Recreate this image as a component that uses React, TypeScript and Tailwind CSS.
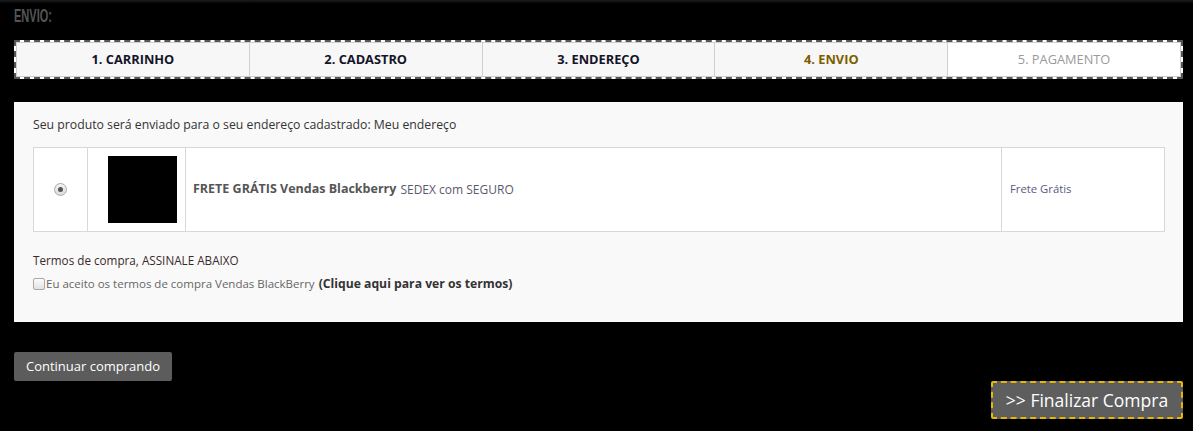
const steps = [
    { label: "1. CARRINHO", state: "done" },
    { label: "2. CADASTRO", state: "done" },
    { label: "3. ENDEREÇO", state: "done" },
    { label: "4. ENVIO", state: "current" },
    { label: "5. PAGAMENTO", state: "next" },
]

const App = () => {
    return (
        <div className="w-[1193px] h-[431px] bg-black overflow-hidden font-['Open_Sans',sans-serif]">
            <div className="h-[6px] bg-gradient-to-b from-[#1e1e1e] to-black"></div>
            <div className="pl-[14px] pr-[10px]">
                <h1 className="h-[20px] pt-[1px] leading-[17px]">
                    <span className="block origin-left scale-x-[0.58] text-[19px] font-bold text-[#555] font-['Liberation_Sans',sans-serif]">
                        ENVIO:
                    </span>
                </h1>

                <div className="mt-[14px] border-2 border-dashed border-[#555] bg-white">
                    <div className="flex border border-[#cfcfcf]">
                        {steps.map((s, i) => (
                            <div
                                key={s.label}
                                className={`flex-1 h-[33px] flex items-center justify-center text-[12.8px] ${i > 0 ? "border-l border-[#cfcfcf]" : ""} ${s.state === "next" ? "bg-white text-[#9a9a9a] font-normal" : "bg-[#f7f7f7] font-bold"} ${s.state === "current" ? "text-[#7d5e00]" : ""} ${s.state === "done" ? "text-[#141428]" : ""}`}
                            >
                                {s.label}
                            </div>
                        ))}
                    </div>
                </div>

                <div className="mt-[23px] h-[220px] bg-[#f9f9f9] pl-[19px] pr-[18px] pt-[15px]">
                    <p className="text-[12.25px] leading-[16px] text-[#333]">
                        Seu produto será enviado para o seu endereço cadastrado: Meu endereço
                    </p>
                    <div className="mt-[14px] flex h-[85px] border border-[#d8d8d8] bg-white">
                        <div className="w-[53px] flex items-center justify-center">
                            <span className="w-[13px] h-[13px] rounded-full border border-[#aaa] bg-gradient-to-b from-[#f4f4f4] to-[#dcdcdc] flex items-center justify-center">
                                <span className="w-[5px] h-[5px] rounded-full bg-[#555]"></span>
                            </span>
                        </div>
                        <div className="w-[98px] border-l border-[#d8d8d8] flex items-center pl-[20px]">
                            <div className="w-[69px] h-[67px] bg-black"></div>
                        </div>
                        <div className="flex-1 border-l border-[#d8d8d8] flex items-center pl-[7px] text-[12px] text-[#5a5a6e]">
                            <span className="font-bold text-[12.5px] text-[#555] mr-[4px]">FRETE GRÁTIS Vendas Blackberry</span>
                            SEDEX com SEGURO
                        </div>
                        <div className="w-[163px] border-l border-[#d8d8d8] flex items-center pl-[8px] text-[11.3px] text-[#5a5a7e]">
                            Frete Grátis
                        </div>
                    </div>
                    <p className="mt-[20px] text-[11.7px] leading-[16px] text-[#3a2a2a]">
                        Termos de compra, ASSINALE ABAIXO
                    </p>
                    <label className="mt-[8px] flex items-center text-[11.5px] leading-[16px] text-[#666]">
                        <span className="w-[12px] h-[12px] mr-[1px] rounded-[2px] border border-[#a8a8a8] bg-gradient-to-b from-[#fbfbfb] to-[#e2e2e2]"></span>
                        Eu aceito os termos de compra Vendas BlackBerry
                        <b className="ml-[4px] text-[12.2px] text-[#333]">(Clique aqui para ver os termos)</b>
                    </label>
                </div>

                <div className="mt-[30px] flex flex-col">
                    <button className="self-start h-[29px] w-[158px] rounded-[2px] bg-[#5c5c5c] text-white text-[13px]">
                        Continuar comprando
                    </button>
                    <button className="self-end h-[38px] w-[192px] rounded-[2px] border-2 border-dashed border-[#e8b800] bg-[#5e5e5e] text-white text-[17.5px]">
                        &gt;&gt; Finalizar Compra
                    </button>
                </div>
            </div>
        </div>
    )
}

export default App
